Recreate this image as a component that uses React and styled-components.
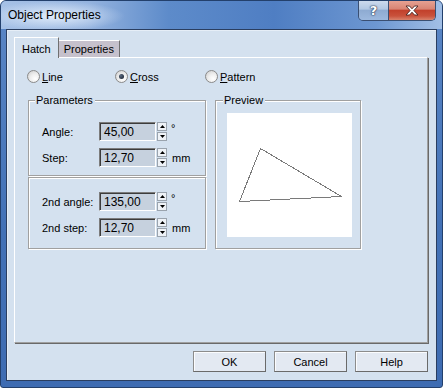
import React from 'react';
import styled, { createGlobalStyle } from 'styled-components';

const GlobalStyle = createGlobalStyle`
  body {
    margin: 0;
    font-family: "Liberation Sans", Arial, sans-serif;
    font-size: 11px;
    color: #000;
  }
`;

const Window = styled.div`
  width: 443px;
  height: 388px;
  box-sizing: border-box;
  display: flex;
  flex-direction: column;
  border: 1px solid #23406c;
  border-radius: 6px 6px 3px 3px;
  background: linear-gradient(to bottom, #5b87c6, #4271b6 60%, #3e6cb2);
  overflow: hidden;
`;

const TitleBar = styled.div`
  height: 28px;
  flex-shrink: 0;
  display: flex;
  align-items: center;
  padding-left: 7px;
  background:
    radial-gradient(ellipse 70px 15px at 54px 15px, rgba(230, 240, 252, 0.95), rgba(230, 240, 252, 0) 100%),
    linear-gradient(90deg, #a6c1e6 0%, #94b3df 20%, #5d8bca 38%, #4f7ec3 62%, #6d97d1 85%, #a2bfe6 100%);
`;

const Title = styled.div`
  flex: 1;
  font-size: 12px;
  color: #000;
`;

const CaptionButtons = styled.div`
  align-self: flex-start;
  display: flex;
  margin: -1px 6px 0 0;
  height: 20px;
  border: 1px solid #3a4f72;
  border-top: none;
  border-radius: 0 0 5px 5px;
  overflow: hidden;
`;

const CaptionButton = styled.div`
  width: ${p => p.$w}px;
  display: flex;
  align-items: center;
  justify-content: center;
  background: ${p => p.$close
    ? 'linear-gradient(to bottom, #e8a596 0%, #d98473 45%, #c2412c 52%, #c9523c 80%, #d8836d 100%)'
    : 'linear-gradient(to bottom, #cfdcee 0%, #b2c8e3 45%, #8eabd2 52%, #9db9de 100%)'};
  & + & {
    border-left: 1px solid #3a4f72;
  }
  font-family: "DejaVu Sans", sans-serif;
  font-weight: bold;
  font-size: 13px;
  color: #fff;
  text-shadow: 0 0 1px #2c3e5c, 0 0 1px #2c3e5c, 0 0 2px #2c3e5c;
`;

const Client = styled.div`
  flex: 1;
  margin: 0 5px 6px 5px;
  border: 1px solid #2a3e60;
  background: #d4e1ef;
  box-shadow: inset 1px 1px 0 #e6eef7;
  display: flex;
  flex-direction: column;
  padding: 7px 8px 8px 7px;
`;

const TabStrip = styled.div`
  height: 20px;
  display: flex;
  align-items: flex-end;
`;

const Tab = styled.div`
  box-sizing: border-box;
  height: ${p => (p.$active ? 21 : 17)}px;
  margin-bottom: ${p => (p.$active ? -1 : 0)}px;
  padding: ${p => (p.$active ? '5px 7px 0 7px' : '2px 5px 0 5px')};
  background: ${p => (p.$active ? '#d4e1ef' : '#c6c1cc')};
  border-top: 1px solid #fff;
  border-left: ${p => (p.$active ? '1px solid #fff' : 'none')};
  border-right: 1px solid #707070;
  position: relative;
  z-index: ${p => (p.$active ? 1 : 0)};
`;

const Panel = styled.div`
  flex: 1;
  border: 1px solid #a0a0a0;
  border-left-color: #fff;
  border-top-color: #fff;
  box-shadow: 1px 1px 0 #696969;
  padding: 12px 12px 0 12px;
  display: flex;
  flex-direction: column;
`;

const RadioRow = styled.div`
  display: flex;
  height: 13px;
  align-items: center;
`;

const RadioItem = styled.label`
  width: ${p => p.$w}px;
  display: flex;
  align-items: center;
  gap: 2px;
  & u {
    text-decoration: underline;
  }
`;

const RadioCircle = styled.span`
  box-sizing: border-box;
  width: 13px;
  height: 13px;
  border-radius: 50%;
  border: 1px solid #8a8a8a;
  background: radial-gradient(circle at 65% 70%, #ffffff 0%, #eeeeee 45%, #c9c9c9 100%);
  display: flex;
  align-items: center;
  justify-content: center;
  &::after {
    content: '';
    width: 5px;
    height: 5px;
    border-radius: 50%;
    background: ${p => (p.$on ? 'radial-gradient(circle at 35% 35%, #5a6a80, #141c28)' : 'transparent')};
  }
`;

const BoxRow = styled.div`
  display: flex;
  margin: 17px 0 0 1px;
  gap: 9px;
`;

const Column = styled.div`
  width: 178px;
  display: flex;
  flex-direction: column;
  gap: 1px;
`;

const Group = styled.div`
  box-sizing: border-box;
  width: ${p => p.$w || 178}px;
  height: ${p => p.$h}px;
  border: 1px solid #a0a0a0;
  box-shadow: inset 1px 1px 0 #fff, 1px 1px 0 #fff;
  display: flex;
  flex-direction: column;
  padding: ${p => p.$pad};
`;

const Legend = styled.div`
  align-self: flex-start;
  margin: -8px 0 0 ${p => p.$left}px;
  padding: 0 2px 0 1px;
  line-height: 14px;
  background: #d4e1ef;
`;

const Rows = styled.div`
  display: flex;
  flex-direction: column;
  gap: 7px;
  margin-top: ${p => p.$top}px;
`;

const Row = styled.div`
  display: flex;
  align-items: center;
  height: 19px;
`;

const FieldLabel = styled.div`
  width: 57px;
`;

const Input = styled.div`
  box-sizing: border-box;
  width: 57px;
  height: 19px;
  border: 1px solid;
  border-color: #7c7c7c #ffffff #ffffff #7c7c7c;
  box-shadow: inset 1px 1px 0 #3c3c3c;
  background: #c6d1de;
  padding: 2px 0 0 4px;
  font-size: 12px;
`;

const Spinner = styled.div`
  margin-left: 1px;
  width: 10px;
  height: 19px;
  display: flex;
  flex-direction: column;
  gap: 1px;
`;

const SpinButton = styled.div`
  box-sizing: border-box;
  flex: 1;
  border: 1px solid #9aa3ad;
  background: #eef2f7;
  display: flex;
  align-items: center;
  justify-content: center;
`;

const Unit = styled.div`
  margin-left: ${p => p.$left}px;
  align-self: ${p => (p.$sup ? 'flex-start' : 'center')};
`;

const PreviewCanvas = styled.div`
  width: 125px;
  height: 124px;
  margin-top: 6px;
  background: #fff;
`;

const Footer = styled.div`
  margin-top: 8px;
  display: flex;
  justify-content: flex-end;
  gap: 8px;
`;

const Button = styled.button`
  box-sizing: border-box;
  width: 73px;
  height: 21px;
  border: 1px solid #8c8c8c;
  border-right-color: #6a6a6a;
  border-bottom-color: #6a6a6a;
  box-shadow: inset 1px 1px 0 #fbfcfe;
  background: #e3e9f2;
  font-family: "Liberation Sans", Arial, sans-serif;
  font-size: 11px;
  color: #000;
  padding: 0;
`;

const Arrow = ({ up }) => (
  <svg width="5" height="3" viewBox="0 0 5 3">
    <path d={up ? 'M2.5 0 L5 3 L0 3 Z' : 'M0 0 L5 0 L2.5 3 Z'} fill="#000" />
  </svg>
);

const NumberField = ({ label, value, unit }) => (
  <Row>
    <FieldLabel>{label}</FieldLabel>
    <Input>{value}</Input>
    <Spinner>
      <SpinButton><Arrow up /></SpinButton>
      <SpinButton><Arrow /></SpinButton>
    </Spinner>
    {unit === '°'
      ? <Unit $left={4} $sup>°</Unit>
      : <Unit $left={5}>{unit}</Unit>}
  </Row>
);

const CloseIcon = () => (
  <svg width="14" height="11" viewBox="0 0 14 11">
    <path
      d="M1 1 H4.5 L7 3.8 L9.5 1 H13 L8.9 5.5 L13 10 H9.5 L7 7.2 L4.5 10 H1 L5.1 5.5 Z"
      fill="#fff"
      stroke="#4a2420"
      strokeWidth="0.9"
      strokeLinejoin="round"
    />
  </svg>
);

const App = () => {
  return (
    <>
      <GlobalStyle />
      <Window>
        <TitleBar>
          <Title>Object Properties</Title>
          <CaptionButtons>
            <CaptionButton $w={29}>?</CaptionButton>
            <CaptionButton $w={46} $close><CloseIcon /></CaptionButton>
          </CaptionButtons>
        </TitleBar>
        <Client>
          <TabStrip>
            <Tab $active>Hatch</Tab>
            <Tab>Properties</Tab>
          </TabStrip>
          <Panel>
            <RadioRow>
              <RadioItem $w={88}><RadioCircle /><span><u>L</u>ine</span></RadioItem>
              <RadioItem $w={90}><RadioCircle $on /><span><u>C</u>ross</span></RadioItem>
              <RadioItem $w={100}><RadioCircle /><span><u>P</u>attern</span></RadioItem>
            </RadioRow>
            <BoxRow>
              <Column>
                <Group $h={76} $pad="0 0 0 13px">
                  <Legend $left={-7}>Parameters</Legend>
                  <Rows $top={15}>
                    <NumberField label="Angle:" value="45,00" unit="°" />
                    <NumberField label="Step:" value="12,70" unit="mm" />
                  </Rows>
                </Group>
                <Group $h={72} $pad="14px 0 0 13px">
                  <Rows $top={0}>
                    <NumberField label="2nd angle:" value="135,00" unit="°" />
                    <NumberField label="2nd step:" value="12,70" unit="mm" />
                  </Rows>
                </Group>
              </Column>
              <Group $w={146} $h={149} $pad="0 0 0 11px">
                <Legend $left={-4}>Preview</Legend>
                <PreviewCanvas>
                  <svg width="125" height="124" viewBox="0 0 125 124" shapeRendering="crispEdges">
                    <polygon points="33.5,35.5 12.5,88.5 114.5,83.5" fill="none" stroke="#7a7a7a" strokeWidth="1" />
                  </svg>
                </PreviewCanvas>
              </Group>
            </BoxRow>
          </Panel>
          <Footer>
            <Button>OK</Button>
            <Button>Cancel</Button>
            <Button>Help</Button>
          </Footer>
        </Client>
      </Window>
    </>
  );
};

export default App;
